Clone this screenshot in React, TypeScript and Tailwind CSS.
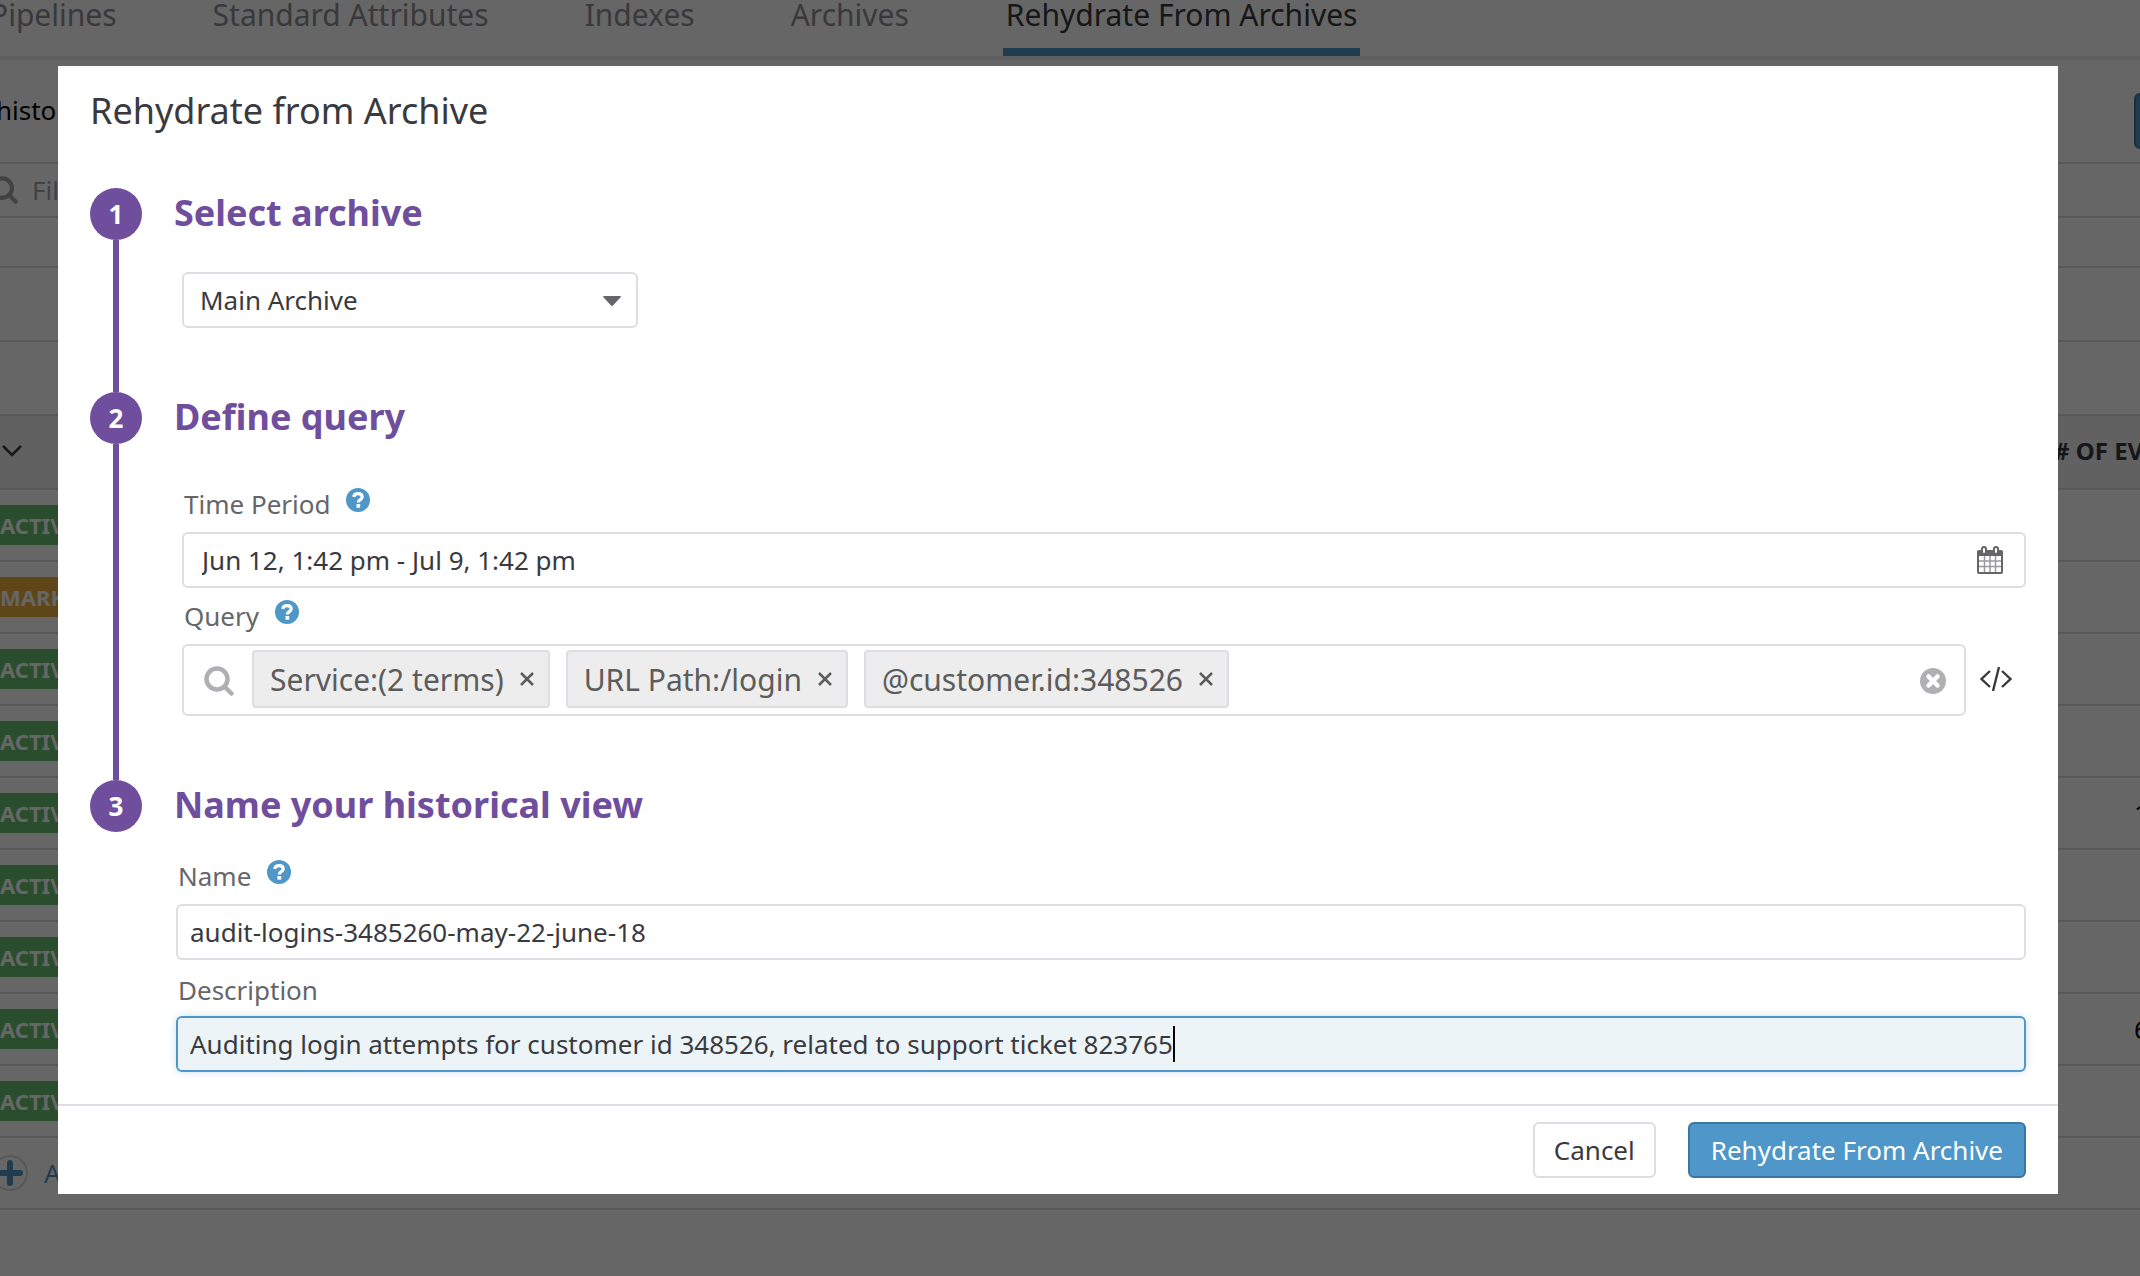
import React from "react";

const statuses = ["ACTIVE", "MARKED", "ACTIVE", "ACTIVE", "ACTIVE", "ACTIVE", "ACTIVE", "ACTIVE", "ACTIVE"];
const events = ["", "", "", "", "1", "", "", "6", ""];

function SearchIcon({ className }: { className: string }) {
  return (
    <svg viewBox="0 0 30 30" className={className} fill="none" stroke="currentColor" strokeWidth="4.5" strokeLinecap="round" aria-hidden="true">
      <circle cx="13" cy="13" r="10.5" />
      <path d="M21 21l6.5 6.5" />
    </svg>
  );
}

function HelpIcon() {
  return (
    <svg viewBox="0 0 24 24" className="mb-2 size-6 shrink-0" aria-hidden="true">
      <circle cx="12" cy="12" r="12" fill="#4e97c8" />
      <path d="M7.600 8.800C8.200 6.500 9.800 5.700 12 5.700c2.400 0 4.200 1.200 4.200 3.200 0 2.900-3.800 2.600-3.900 5.600" fill="none" stroke="#fff" strokeWidth="3.200" />
      <rect x="10.500" y="16" width="3.700" height="3.700" fill="#fff" />
    </svg>
  );
}

function CalendarIcon() {
  return (
    <svg viewBox="0 0 26 28" className="h-7 w-[26px]" aria-hidden="true">
      <path d="M1 6h24v20a1 1 0 0 1-1 1H2a1 1 0 0 1-1-1z" fill="#fff" stroke="#66666a" strokeWidth="2" />
      <path d="M2 4h22q2 0 2 2v4H0V6q0-2 2-2z" fill="#66666a" />
      <path d="M7.500 10v16M13 10v16M18.500 10v16M2 15h22M2 20.500h22" stroke="#9a9a9d" strokeWidth="1.500" />
      <rect x="5" y="1" width="4" height="7" rx="2" fill="#fff" stroke="#66666a" strokeWidth="2" />
      <rect x="17" y="1" width="4" height="7" rx="2" fill="#fff" stroke="#66666a" strokeWidth="2" />
    </svg>
  );
}

function Step({ n, title, last, children }: { n: number; title: string; last?: boolean; children: React.ReactNode }) {
  return (
    <section className="flex gap-8">
      <div className="flex w-[52px] shrink-0 flex-col items-center">
        <span className="flex size-[52px] shrink-0 items-center justify-center rounded-full bg-[#6f4e9e] text-[26px] font-bold text-white">{n}</span>
        {!last && <span className="w-1.5 grow bg-[#6f4e9e]" />}
      </div>
      <div className="min-w-0 grow">
        <h2 className="pb-0.5 text-[36px] leading-[50px] font-bold text-[#6f4e9e]">{title}</h2>
        {children}
      </div>
    </section>
  );
}

function Label({ htmlFor, help, children }: { htmlFor: string; help?: boolean; children: string }) {
  return (
    <div className={help ? "flex h-14 items-center gap-4 px-0.5" : "flex h-14 items-center px-0.5 pt-1"}>
      <label htmlFor={htmlFor} className="text-[26px] leading-9 text-[#66666a]">{children}</label>
      {help && <HelpIcon />}
    </div>
  );
}

function Chip({ children }: { children: string }) {
  return (
    <span className="flex h-[58px] items-center gap-4 rounded border-2 border-[#dddde3] bg-[#ededed] pr-3.5 pl-4 text-[30px] text-[#5c5c5c]">
      {children}
      <button type="button" aria-label={"Remove " + children}>
        <svg viewBox="0 0 14 14" className="w-3.5" stroke="#5c5c5c" strokeWidth="2.500" aria-hidden="true">
          <path d="M1 1l12 12M13 1L1 13" />
        </svg>
      </button>
    </span>
  );
}

function Tab({ active, children }: { active?: boolean; children: string }) {
  return (
    <a
      href="#"
      className={
        active
          ? "h-14 border-b-8 border-[#4e97c8] px-[3px] text-[#3a3a3e] whitespace-nowrap"
          : "h-14 px-0.5 text-[#8f8f94] whitespace-nowrap"
      }
    >
      {children}
    </a>
  );
}

function Background() {
  return (
    <div className="absolute inset-0 overflow-hidden bg-white">
      <nav className="-ml-3 flex gap-[92px] border-b-4 border-[#ececee] text-[30px] leading-[30px]">
        <Tab>Pipelines</Tab>
        <Tab>Standard Attributes</Tab>
        <Tab>Indexes</Tab>
        <Tab>Archives</Tab>
        <Tab active>Rehydrate From Archives</Tab>
      </nav>
      <div className="flex h-[104px] items-center justify-between border-b-2 border-[#dddde0] text-[26px] text-black">
        <p className="mb-0.5 -ml-1">histor</p>
        <button type="button" aria-label="New historical view" className="-mr-10 mt-8 mb-3 h-14 w-[46px] rounded-md border-2 border-[#3b76a0] bg-[#4e97c8]" />
      </div>
      <label className="flex h-[54px] items-center gap-3.5 border-b-2 border-[#dddde0] text-[#a5a5a9]">
        <SearchIcon className="-ml-[10px] size-7 shrink-0" />
        <input className="w-full text-[26px] outline-none placeholder:text-[#a5a5a9]" placeholder="Filter" />
      </label>
      <div className="h-[50px] border-b-2 border-[#dddde0]" />
      <div className="h-[74px] border-b-2 border-[#dddde0]" />
      <div className="h-[74px] border-b-2 border-[#dddde0]" />
      <table className="w-full table-fixed border-collapse">
        <thead>
          <tr className="h-[73px] border-b-2 border-[#dddde0] bg-[#f2f2f2] text-left text-[24px] text-[#3a3a3e]">
            <th className="p-0 pb-0.5">
              <svg viewBox="0 0 20 12" className="ml-0.5 h-3 w-5" fill="none" stroke="currentColor" strokeWidth="2.500" aria-label="Status">
                <path d="M1 1l9 9 9-9" />
              </svg>
            </th>
            <th className="w-[86px] p-0 pb-0.5 whitespace-nowrap"># OF EV</th>
          </tr>
        </thead>
        <tbody>
          {statuses.map((s, i) => (
            <tr key={i} className="h-[72px] border-b-2 border-[#dddde0]">
              <td className="p-0">
                <span className={s === "MARKED" ? "flex h-10 w-[110px] items-center bg-[#edaf3f] text-[22px] font-bold text-white" : "flex h-10 w-[90px] items-center bg-[#67c170] text-[22px] font-bold text-white"}>{s}</span>
              </td>
              <td className="p-0 pl-20 text-[26px] text-black">{events[i]}</td>
            </tr>
          ))}
        </tbody>
      </table>
      <div className="flex h-[72px] items-center gap-4 border-b-2 border-[#dddde0] text-[26px] text-[#4e97c8]">
        <svg viewBox="0 0 36 36" className="-ml-2 size-9" aria-hidden="true">
          <circle cx="18" cy="18" r="17" fill="none" stroke="#dddde0" strokeWidth="2" />
          <path d="M18 8v20M8 18h20" stroke="#4e97c8" strokeWidth="6" strokeLinecap="round" />
        </svg>
        <a href="#">Add</a>
      </div>
    </div>
  );
}

const field = "h-14 w-full rounded-md border-2 border-[#dddde3] bg-white text-[26px] text-[#3a3a3e] outline-none";

export default function App() {
  return (
    <div className="relative min-h-screen overflow-hidden font-['Noto_Sans',sans-serif]">
      <Background />
      <div className="absolute inset-0 bg-black/60 pt-[66px] pr-[82px] pl-[58px]">
        <div role="dialog" aria-labelledby="title" className="bg-white">
          <div className="px-8 pt-5 pb-8">
            <h1 id="title" className="mb-[52px] text-[36px] leading-[50px] text-[#3a3a3e]">Rehydrate from Archive</h1>
            <Step n={1} title="Select archive">
              <div className="relative mt-8 mb-16 ml-2 w-[456px]">
                <select aria-label="Archive" className={`${field} appearance-none px-4`}>
                  <option>Main Archive</option>
                </select>
                <svg viewBox="0 0 18 10" className="pointer-events-none absolute top-6 right-[17px] h-2.5 w-[18px]" aria-hidden="true">
                  <path d="M1 0h16q1.500 0 .6 1.200L10 9.500q-1 .8-2 0L.4 1.200Q-.5 0 1 0z" fill="#66666a" />
                </svg>
              </div>
            </Step>
            <Step n={2} title="Define query">
              <div className="mt-8 mb-16 ml-2">
                <Label htmlFor="period" help>Time Period</Label>
                <div className="relative">
                  <input id="period" className={`${field} px-[18px]`} defaultValue="Jun 12, 1:42 pm - Jul 9, 1:42 pm" />
                  <button type="button" aria-label="Open calendar" className="absolute top-3.5 right-[23px]">
                    <CalendarIcon />
                  </button>
                </div>
                <Label htmlFor="query" help>Query</Label>
                <div className="flex items-center gap-3.5">
                  <div className="flex h-[72px] grow items-start gap-4 rounded-md border-2 border-[#dddde3] pt-1 pr-[18px] pl-5">
                    <SearchIcon className="mt-4 mr-0.5 size-[30px] shrink-0 text-[#b0afb4]" />
                    <Chip>Service:(2 terms)</Chip>
                    <Chip>URL Path:/login</Chip>
                    <Chip>@customer.id:348526</Chip>
                    <input id="query" className="h-14 min-w-0 grow text-[30px] outline-none" />
                    <button type="button" aria-label="Clear query" className="mt-[18px]">
                      <svg viewBox="0 0 26 26" className="size-[26px]" aria-hidden="true">
                        <circle cx="13" cy="13" r="13" fill="#b0afb4" />
                        <path d="M8.500 8.500l9 9M17.500 8.500l-9 9" stroke="#fff" strokeWidth="4.500" strokeLinecap="round" />
                      </svg>
                    </button>
                  </div>
                  <button type="button" aria-label="Edit raw query" className="mr-3.5 mb-0.5">
                    <svg viewBox="0 0 32 26" className="h-[26px] w-8" fill="none" stroke="#3a3a3e" strokeWidth="2.400" aria-hidden="true">
                      <path d="M10 5L1.500 13l8.500 8M22 5l8.500 8L22 21M19 1l-6 24" />
                    </svg>
                  </button>
                </div>
              </div>
            </Step>
            <Step n={3} title="Name your historical view" last>
              <div className="mt-4 ml-0.5">
                <Label htmlFor="name" help>Name</Label>
                <input id="name" className={`${field} px-3`} defaultValue="audit-logins-3485260-may-22-june-18" />
                <Label htmlFor="description">Description</Label>
                <div className="flex h-14 items-center rounded-md border-2 border-[#4e97c8] bg-[#ecf4f8] shadow-[0_0_8px_rgba(78,151,200,0.3)]">
                  <input
                    id="description"
                    className="field-sizing-content h-9 border-r-2 border-black pl-3 text-[26px] text-[#3a3a3e] outline-none"
                    defaultValue="Auditing login attempts for customer id 348526, related to support ticket 823765"
                  />
                </div>
              </div>
            </Step>
          </div>
          <footer className="flex justify-end gap-8 border-t-2 border-[#dddde3] px-8 py-4 text-[26px]">
            <button type="button" className="h-14 rounded-md border-2 border-[#dddde3] bg-white px-[19px] text-[#3a3a3e]">Cancel</button>
            <button type="button" className="h-14 rounded-md border-2 border-[#3b76a0] bg-[#4e97c8] px-[21px] text-white">Rehydrate From Archive</button>
          </footer>
        </div>
      </div>
    </div>
  );
}
